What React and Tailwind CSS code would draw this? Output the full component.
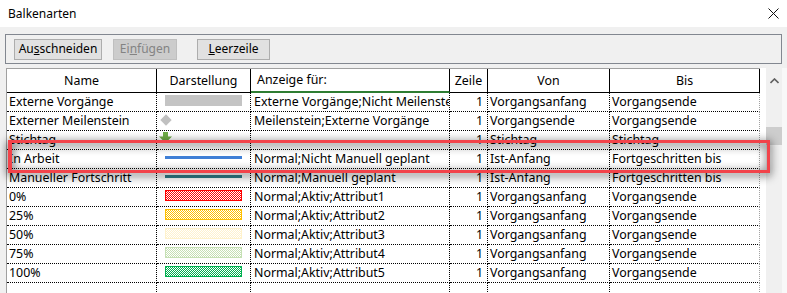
import React from "react";

const rows = [
  { name: "Externe Vorgänge", bar: "gray", show: "Externe Vorgänge;Nicht Meilensteine", von: "Vorgangsanfang", bis: "Vorgangsende" },
  { name: "Externer Meilenstein", bar: "diamond", show: "Meilenstein;Externe Vorgänge", von: "Vorgangsende", bis: "Vorgangsende" },
  { name: "Stichtag", bar: "arrow", show: "", von: "Stichtag", bis: "Stichtag" },
  { name: "In Arbeit", bar: "blue", show: "Normal;Nicht Manuell geplant", von: "Ist-Anfang", bis: "Fortgeschritten bis" },
  { name: "Manueller Fortschritt", bar: "teal", show: "Normal;Manuell geplant", von: "Ist-Anfang", bis: "Fortgeschritten bis" },
  { name: "0%", bar: "red", show: "Normal;Aktiv;Attribut1", von: "Vorgangsanfang", bis: "Vorgangsende" },
  { name: "25%", bar: "yellow", show: "Normal;Aktiv;Attribut2", von: "Vorgangsanfang", bis: "Vorgangsende" },
  { name: "50%", bar: "pale", show: "Normal;Aktiv;Attribut3", von: "Vorgangsanfang", bis: "Vorgangsende" },
  { name: "75%", bar: "lightgreen", show: "Normal;Aktiv;Attribut4", von: "Vorgangsanfang", bis: "Vorgangsende" },
  { name: "100%", bar: "green", show: "Normal;Aktiv;Attribut5", von: "Vorgangsanfang", bis: "Vorgangsende" },
  { name: "", bar: null, show: "", von: "", bis: "", empty: true },
];

const checkers = {
  red: { border: "#ff0000", fill: "#ff0000" },
  yellow: { border: "#ffc000", fill: "#ffc000" },
  pale: { border: "#fff2cc", fill: "#fff2cc" },
  lightgreen: { border: "#c5e0b4", fill: "#c5e0b4" },
  green: { border: "#00b050", fill: "#00b050" },
};

function Bar({ kind }) {
  if (!kind) return null;
  if (kind === "gray") return <div className="ml-[8px] mt-[1px] w-[77px] h-[11px] bg-[#c4c4c4]" />;
  if (kind === "diamond")
    return <div className="ml-[5px] mt-[3px] w-[8px] h-[8px] rotate-45 bg-[#c0c0c0]" />;
  if (kind === "arrow")
    return (
      <svg width="13" height="11" viewBox="0 0 13 11" className="ml-[2px] mt-[0px]">
        <path d="M4 0h5v4.5h4l-6.5 6.5-6.5-6.5h4z" fill="#70ad47" />
      </svg>
    );
  if (kind === "blue") return <div className="ml-[8px] mt-[5px] w-[77px] h-[3px] bg-[#3f7fd6]" />;
  if (kind === "teal") return <div className="ml-[8px] mt-[5px] w-[77px] h-[3px] bg-[#2f7d8a]" />;
  const c = checkers[kind];
  const id = "chk-" + kind;
  return (
    <svg width="77" height="11" className="ml-[8px] mt-[1px] block">
      <defs>
        <pattern id={id} width="2" height="2" patternUnits="userSpaceOnUse">
          <rect width="2" height="2" fill="#ffffff" />
          <rect width="1" height="1" fill={c.fill} />
          <rect x="1" y="1" width="1" height="1" fill={c.fill} />
        </pattern>
      </defs>
      <rect x="0.5" y="0.5" width="76" height="10" fill={`url(#${id})`} stroke={c.border} />
    </svg>
  );
}

function Btn({ children, disabled, w }) {
  return (
    <div
      className={`h-[21px] ${w} flex items-center justify-center border text-[12px] ${
        disabled ? "bg-[#cccccc] border-[#bfbfbf] text-[#838383]" : "bg-[#e1e1e1] border-[#adadad] text-black"
      }`}
    >
      {children}
    </div>
  );
}

const cell = "border-r border-dotted border-black h-[19px] border-b overflow-hidden whitespace-nowrap leading-[18px]";
const head = "h-[24px] border-r border-black border-b border-b-dotted flex items-end justify-center pb-[1px]";

export default function App() {
  return (
    <div
      className="relative w-[787px] h-[293px] overflow-hidden bg-[#f0f0f0] text-black"
      style={{ fontFamily: '"Noto Sans", "Open Sans", sans-serif' }}
    >
      {/* Title */}
      <div className="h-[27px] bg-white flex items-center justify-between pl-[8px] pr-[8px]">
        <span className="text-[12px]">Balkenarten</span>
        <svg width="11" height="11" viewBox="0 0 11 11">
          <path d="M0.5 0.5l10 10M10.5 0.5l-10 10" stroke="#111" strokeWidth="1" />
        </svg>
      </div>

      {/* Toolbar */}
      <div className="ml-[5px] mt-[7px] w-[777px] h-[30px] border border-[#828790] flex items-center gap-[11px] pl-[8px]">
        <Btn w="w-[88px]">
          Au<u>s</u>schneiden
        </Btn>
        <Btn w="w-[64px]" disabled>
          Ei<u>n</u>fügen
        </Btn>
        <div className="ml-[9px]">
          <Btn w="w-[73px]">
            <u>L</u>eerzeile
          </Btn>
        </div>
      </div>

      {/* Table + scrollbar */}
      <div className="mt-[4px] ml-[6px] flex h-[226px]">
        <div className="w-[754px] bg-white border-l border-t border-[#a0a0a0] text-[12.4px]">
          <div className="grid grid-cols-[150px_94px_199px_38px_122px_150px]">
            <div className={head}>Name</div>
            <div className={head}>Darstellung</div>
            <div className="h-[24px] border-r border-black flex items-end pl-[6px] pb-[1px] border-b-[2px] border-b-[#2e7d32]">
              Anzeige für:
            </div>
            <div className={head}>Zeile</div>
            <div className={head}>Von</div>
            <div className={head}>Bis</div>

            {rows.map((r, i) => (
              <React.Fragment key={i}>
                <div className={`${cell} pl-[2px]`}>{r.name}</div>
                <div className={`${cell} pt-[1px]`}>
                  <Bar kind={r.bar} />
                </div>
                <div className={`${cell} pl-[3px]`}>{r.show}</div>
                <div className={`${cell} text-right pr-[4px]`}>{r.empty ? "" : "1"}</div>
                <div className={`${cell} pl-[2px]`}>{r.von}</div>
                <div className={`${cell} pl-[2px] border-r-solid border-r-[#a0a0a0]`}>{r.bis}</div>
              </React.Fragment>
            ))}
          </div>
        </div>
        <div className="w-[6px] bg-white" />
        <div className="w-[16px] bg-[#f0f0f0] flex flex-col items-center">
          <svg width="9" height="6" viewBox="0 0 9 6" className="mt-[10px]">
            <path d="M0.5 5l4-4 4 4" stroke="#606060" strokeWidth="1.6" fill="none" />
          </svg>
          <div className="mt-[43px] w-[16px] h-[18px] bg-[#cdcdcd]" />
        </div>
        <div className="w-[5px] bg-[#f8f8f8]" />
      </div>

      {/* Annotation box */}
      <div className="absolute left-[8px] top-[140px] w-[762px] h-[33px] border-[3px] border-l-[4px] border-[#f2434a] drop-shadow-[0_2px_5px_rgba(0,0,0,0.95)]" />
    </div>
  );
}
